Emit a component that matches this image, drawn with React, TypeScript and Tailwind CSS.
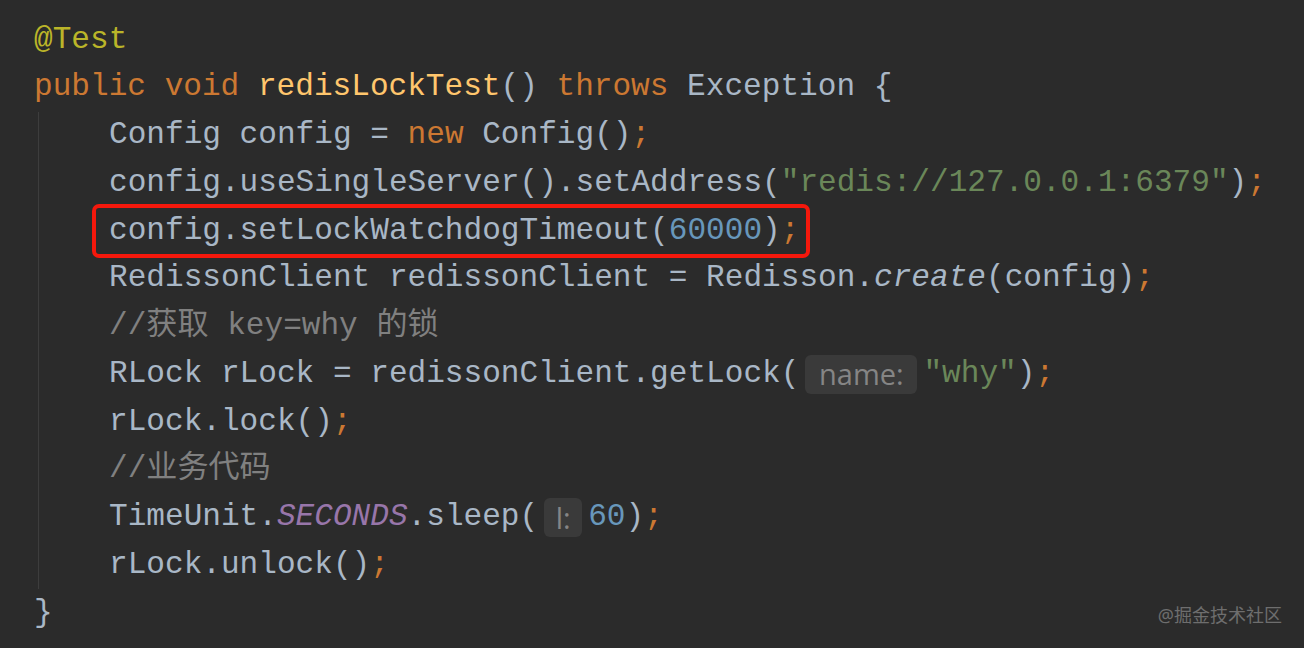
import React from "react";

const K = ({ children }: { children: React.ReactNode }) => (
  <span className="text-[#cc7832]">{children}</span>
);
const S = ({ children }: { children: React.ReactNode }) => (
  <span className="text-[#6a8759]">{children}</span>
);
const N = ({ children }: { children: React.ReactNode }) => (
  <span className="text-[#6897bb]">{children}</span>
);
const Hint = ({ label, w }: { label: string; w: string }) => (
  <span
    className={`inline-flex items-center justify-center h-[39px] mx-[6px] rounded-[6px] bg-[#3a3a3a] text-[#858585] text-[29px] ${w}`}
    style={{ fontFamily: '"Open Sans", "Noto Sans", sans-serif' }}
  >
    {label}
  </span>
);

const Line = ({ children, rel }: { children: React.ReactNode; rel?: boolean }) => (
  <div className={`h-[47.75px] flex items-center whitespace-pre ${rel ? "relative" : ""}`}>
    {children}
  </div>
);

export default function App() {
  return (
    <div
      className="relative w-[1304px] h-[648px] bg-[#2b2b2b] overflow-hidden text-[#a9b7c6] text-[31.1px]"
      style={{ fontFamily: '"Liberation Mono", "Noto Sans CJK SC", monospace' }}
    >
      <div className="pt-[16px] pl-[34px]">
        <Line>
          <span className="text-[#bbb529]">@Test</span>
        </Line>
        <Line>
          <K>public </K>
          <K>void </K>
          <span className="text-[#ffc66d]">redisLockTest</span>
          <span>() </span>
          <K>throws </K>
          <span>Exception {"{"}</span>
        </Line>
        <div className="ml-[4px] border-l border-[#3d3d3d] pl-[70px]">
          <Line>
            <span>Config config = </span>
            <K>new </K>
            <span>Config()</span>
            <K>;</K>
          </Line>
          <Line>
            <span>config.useSingleServer().setAddress(</span>
            <S>"redis://127.0.0.1:6379"</S>
            <span>)</span>
            <K>;</K>
          </Line>
          <Line rel>
            <span>config.setLockWatchdogTimeout(</span>
            <N>60000</N>
            <span>)</span>
            <K>;</K>
            <div className="absolute left-[-17px] top-[-3px] w-[718px] h-[54px] border-4 border-[#f5180c] rounded-[7px]" />
          </Line>
          <Line>
            <span>RedissonClient redissonClient = Redisson.</span>
            <span className="italic">create</span>
            <span>(config)</span>
            <K>;</K>
          </Line>
          <Line>
            <span className="text-[#808080]">//获取 key=why 的锁</span>
          </Line>
          <Line>
            <span>RLock rLock = redissonClient.getLock(</span>
            <Hint label="name:" w="w-[112px]" />
            <S>"why"</S>
            <span>)</span>
            <K>;</K>
          </Line>
          <Line>
            <span>rLock.lock()</span>
            <K>;</K>
          </Line>
          <Line>
            <span className="text-[#808080]">//业务代码</span>
          </Line>
          <Line>
            <span>TimeUnit.</span>
            <span className="italic text-[#9876aa]">SECONDS</span>
            <span>.sleep(</span>
            <Hint label="l:" w="w-[38px]" />
            <N>60</N>
            <span>)</span>
            <K>;</K>
          </Line>
          <Line>
            <span>rLock.unlock()</span>
            <K>;</K>
          </Line>
        </div>
        <Line>
          <span>{"}"}</span>
        </Line>
      </div>
      <div
        className="absolute right-[22px] bottom-[19px] text-[18px] text-[#6e6e6e]"
        style={{ fontFamily: '"Noto Sans", "Noto Sans CJK SC", sans-serif' }}
      >
        @掘金技术社区
      </div>
    </div>
  );
}
